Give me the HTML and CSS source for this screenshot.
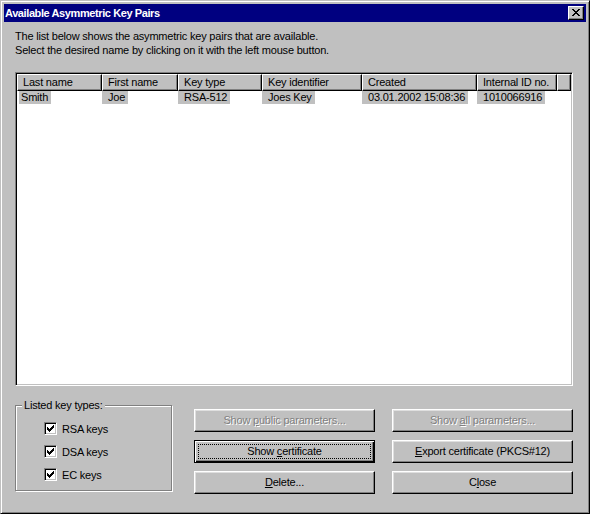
FILE: index.html
```html
<!DOCTYPE html>
<html>
<head>
<meta charset="utf-8">
<title>Available Asymmetric Key Pairs</title>
<link rel="stylesheet" href="styles.css">
</head>
<body>
<div class="window">
  <div class="titlebar">
    <span class="title">Available Asymmetric Key Pairs</span>
    <button class="close" aria-label="Close"><svg width="8" height="7" viewBox="0 0 8 7"><path fill="#000" d="M0 0h2v1H0zM6 0h2v1H6zM1 1h2v1H1zM5 1h2v1H5zM2 2h4v1H2zM3 3h2v1H3zM2 4h4v1H2zM1 5h2v1H1zM5 5h2v1H5zM0 6h2v1H0zM6 6h2v1H6z"/></svg></button>
  </div>
  <div class="content">
    <p class="intro">The list below shows the asymmetric key pairs that are available.<br>Select the desired name by clicking on it with the left mouse button.</p>
    <div class="list">
      <div class="header">
        <div class="hcell c1">Last name</div>
        <div class="hcell c2">First name</div>
        <div class="hcell c3">Key type</div>
        <div class="hcell c4">Key identifier</div>
        <div class="hcell c5">Created</div>
        <div class="hcell c6">Internal ID no.</div>
        <div class="hcell c7"></div>
      </div>
      <div class="row">
        <div class="cell c1"><span>Smith</span></div>
        <div class="cell c2"><span>Joe</span></div>
        <div class="cell c3"><span>RSA-512</span></div>
        <div class="cell c4"><span>Joes Key</span></div>
        <div class="cell c5"><span>03.01.2002 15:08:36</span></div>
        <div class="cell c6"><span>1010066916</span></div>
      </div>
    </div>
    <div class="bottom">
      <fieldset class="group">
        <legend>Listed key types:</legend>
        <div class="checks">
          <label class="check"><span class="box"><svg width="7" height="7" viewBox="0 0 7 7"><path fill="#000" d="M0 2h1v3H0zM1 3h1v3H1zM2 4h1v3H2zM3 3h1v3H3zM4 2h1v3H4zM5 1h1v3H5zM6 0h1v3H6z"/></svg></span>RSA keys</label>
          <label class="check"><span class="box"><svg width="7" height="7" viewBox="0 0 7 7"><path fill="#000" d="M0 2h1v3H0zM1 3h1v3H1zM2 4h1v3H2zM3 3h1v3H3zM4 2h1v3H4zM5 1h1v3H5zM6 0h1v3H6z"/></svg></span>DSA keys</label>
          <label class="check"><span class="box"><svg width="7" height="7" viewBox="0 0 7 7"><path fill="#000" d="M0 2h1v3H0zM1 3h1v3H1zM2 4h1v3H2zM3 3h1v3H3zM4 2h1v3H4zM5 1h1v3H5zM6 0h1v3H6z"/></svg></span>EC keys</label>
        </div>
      </fieldset>
      <div class="btncol">
        <button class="btn" disabled>Show <u>p</u>ublic parameters...</button>
        <button class="btn default"><span class="focus">Show <u>c</u>ertificate</span></button>
        <button class="btn"><u>D</u>elete...</button>
      </div>
      <div class="btncol second">
        <button class="btn" disabled>Show <u>a</u>ll parameters...</button>
        <button class="btn"><u>E</u>xport certificate (PKCS#12)</button>
        <button class="btn">C<u>l</u>ose</button>
      </div>
    </div>
  </div>
</div>
</body>
</html>
```

FILE: styles.css
```css
* { box-sizing: border-box; }
html, body { margin: 0; padding: 0; }
body {
  background: #c0c0c0;
  font-family: "Liberation Sans", Arial, sans-serif;
  font-size: 11px;
  letter-spacing: -0.2px;
  color: #000;
}
.window {
  width: 590px;
  height: 514px;
  background: #c0c0c0;
  border: 1px solid;
  border-color: #c0c0c0 #000 #000 #c0c0c0;
  box-shadow: inset 1px 1px #fff, inset -1px -1px #808080;
  padding: 3px;
  display: flex;
  flex-direction: column;
}
.titlebar {
  height: 18px;
  background: #000080;
  color: #fff;
  display: flex;
  align-items: center;
  justify-content: space-between;
  padding: 0 2px 0 1px;
}
.title {
  font-weight: bold;
  letter-spacing: -0.4px;
  line-height: 14px;
}
.close {
  width: 16px;
  height: 14px;
  padding: 0 0 1px 0;
  margin: 0;
  background: #c0c0c0;
  border: 1px solid;
  border-color: #fff #000 #000 #fff;
  box-shadow: inset -1px -1px #808080;
  display: flex;
  align-items: center;
  justify-content: center;
}
.close svg { display: block; }
.content {
  flex: 1;
  display: flex;
  flex-direction: column;
  padding: 7px 13px 0 11px;
}
.intro {
  margin: 0;
  line-height: 14px;
}
.list {
  margin-top: 15px;
  height: 314px;
  background: #fff;
  border: 1px solid;
  border-color: #808080 #fff #fff #808080;
  box-shadow: inset 1px 1px #000, inset -1px -1px #c0c0c0;
  padding: 1px;
}
.header, .row { display: flex; }
.c1 { width: 85px; }
.c2 { width: 76px; }
.c3 { width: 84px; }
.c4 { width: 100px; }
.c5 { width: 115px; }
.c6 { width: 80px; }
.c7 { width: 14px; }
.hcell {
  flex: none;
  height: 17px;
  background: #c0c0c0;
  border: 1px solid;
  border-color: #fff #000 #000 #fff;
  box-shadow: inset -1px -1px #808080;
  padding-left: 5px;
  line-height: 15px;
  white-space: nowrap;
  overflow: hidden;
}
.cell {
  flex: none;
  height: 13px;
  line-height: 13px;
  white-space: nowrap;
}
.cell span {
  display: inline-block;
  background: #c0c0c0;
  padding: 0 3px 0 6px;
}
.cell.c1 span {
  margin-left: 2px;
  padding-left: 2px;
}
.bottom {
  display: flex;
  align-items: flex-start;
  margin-top: 13px;
}
.group {
  margin: 0 22px 0 0;
  padding: 0;
  width: 157px;
  min-width: 0;
  border: 1px solid #808080;
  box-shadow: inset 1px 1px #fff, 1px 1px #fff;
}
.group legend {
  margin-left: 6px;
  padding: 0 2px;
  line-height: 13px;
  background: #c0c0c0;
}
.checks {
  padding: 5px 0 4px 28px;
}
.check {
  display: flex;
  align-items: center;
  gap: 5px;
  height: 23px;
}
.box {
  width: 13px;
  height: 13px;
  background: #fff;
  border: 1px solid;
  border-color: #808080 #fff #fff #808080;
  box-shadow: inset 1px 1px #000, inset -1px -1px #c0c0c0;
  padding: 2px;
}
.box svg { display: block; }
.btncol {
  width: 181px;
  display: flex;
  flex-direction: column;
  gap: 8px;
  padding-top: 10px;
}
.btncol.second { margin-left: 17px; }
.btn {
  height: 23px;
  margin: 0;
  padding: 0;
  font: inherit;
  letter-spacing: inherit;
  color: #000;
  background: #c0c0c0;
  border: 1px solid;
  border-color: #fff #000 #000 #fff;
  box-shadow: inset -1px -1px #808080, inset 1px 1px #dfdfdf;
  text-align: center;
  line-height: 19px;
}
.btn:disabled {
  color: #808080;
  text-shadow: 1px 1px #fff;
}
.btn.default {
  border: 1px solid #000;
  box-shadow: inset 1px 1px #fff, inset -1px -1px #000, inset -2px -2px #808080;
  padding: 3px;
}
.focus {
  display: block;
  height: 100%;
  line-height: 13px;
  text-align: center;
  border: 1px dotted #000;
}
u { text-decoration: underline; text-underline-offset: 1px; }
```
